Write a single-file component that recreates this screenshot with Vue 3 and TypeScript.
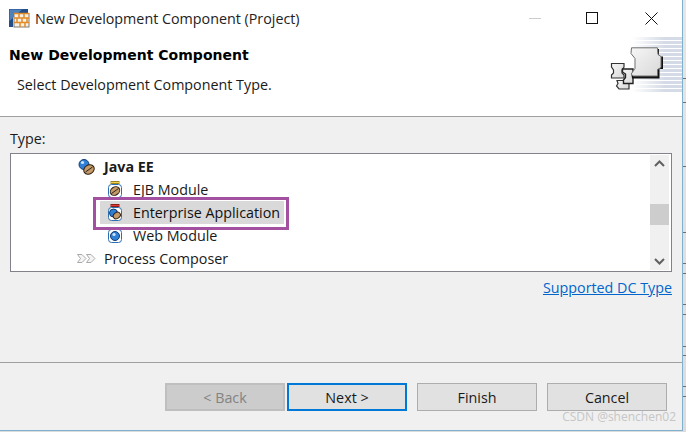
<script setup lang="ts">
const ticks = [78, 102, 166, 232, 263, 273, 304, 314, 346, 355, 386, 396];
const stripes = Array.from({ length: 14 }, (_, i) => 1 + i * 4);
</script>

<template>
  <div class="screen">
    <div class="dialog">
      <div class="titlebar">
        <svg class="app-icon" width="21" height="19" viewBox="0 0 21 19">
          <path d="M0 18V0H19V4H4V18Z" fill="#234e88" />
          <path d="M0.5 15V0.5H13L0.5 12Z" fill="#4f82bb" />
          <rect x="5" y="4.5" width="15" height="13.5" fill="#f6f1e6" stroke="#86796a" />
          <path d="M5 4.5H20M5 9H20M5 13.5H20M10 4.5V9M15 4.5V9M8 9V13.5M13 9V13.5M18 9V13.5M11 13.5V18M16 13.5V18" stroke="#e38b26" stroke-width="1.5" fill="none" />
        </svg>
        <span class="title">New Development Component (Project)</span>
        <span class="minimize"></span>
        <span class="maximize"></span>
        <svg class="close" width="13" height="13" viewBox="0 0 13 13">
          <path d="M0.5 0.5L12.5 12.5M12.5 0.5L0.5 12.5" stroke="#111" fill="none" />
        </svg>
      </div>

      <header class="banner">
        <div class="banner-text">
          <h1>New Development Component</h1>
          <p>Select Development Component Type.</p>
        </div>
        <svg class="banner-art" width="75" height="60" viewBox="0 0 75 60">
          <defs>
            <linearGradient id="fade" x1="0" x2="1" y1="0" y2="0">
              <stop offset="0" stop-color="#d5dbe6" stop-opacity="0" />
              <stop offset="0.65" stop-color="#d5dbe6" />
              <stop offset="1" stop-color="#d5dbe6" />
            </linearGradient>
            <linearGradient id="metal" x1="0" x2="1" y1="0" y2="1">
              <stop offset="0" stop-color="#f6f6f6" />
              <stop offset="1" stop-color="#d8d8d8" />
            </linearGradient>
          </defs>
          <rect v-for="y in stripes" :key="y" x="25" :y="y" width="50" height="3" fill="url(#fade)" />
          <path d="M10 44.5H22V53H12L9.5 50L11 47.5Z" fill="url(#metal)" stroke="#333" stroke-width="1.2" />
          <path d="M4.5 27.5H17V31L15 34V37L17 39V42H4.5V39L6.5 37V34L4.5 31Z" fill="url(#metal)" stroke="#333" stroke-width="1.2" />
          <path d="M15.5 33H26V47.5H16.5V44L18.5 41.5V38L15.5 36Z" fill="url(#metal)" stroke="#222" stroke-width="1.4" />
          <path d="M25 13H52V20.5H56V33H52.5V42.5H25L24.5 39L29 33V23L25 18Z" fill="#111" />
          <path d="M24.5 11.8H50.5L51 18.5L54 20.5V31.5L50.5 33.5V40H26L24.2 38L28 32.5V22.5L24 17.5Z" fill="url(#metal)" stroke="#707070" />
        </svg>
      </header>

      <main class="body">
        <label class="type-label">Type:</label>
        <div class="list">
          <ul class="rows">
            <li class="row parent">
              <svg width="17" height="16" viewBox="0 0 17 16">
                <circle cx="6" cy="5.5" r="5" fill="#2f7fd6" stroke="#123a70" />
                <circle cx="4.5" cy="3.5" r="1.6" fill="#cfe6ff" />
                <ellipse cx="11" cy="10.5" rx="5.5" ry="4.5" transform="rotate(-35 11 10.5)" fill="#c39a68" stroke="#2e2015" />
                <path d="M7.5 13L14.5 8" stroke="#2e2015" />
              </svg>
              <b>Java EE</b>
            </li>
            <li class="row child">
              <svg width="16" height="17" viewBox="0 0 16 17">
                <rect x="4" y="0.5" width="8" height="2" fill="#f2d24b" stroke="#9c8320" />
                <rect x="1.5" y="3.5" width="13" height="13" rx="3" fill="#fff" stroke="#2b6fb0" />
                <ellipse cx="8" cy="10" rx="5" ry="4" transform="rotate(-35 8 10)" fill="#c39a68" stroke="#2e2015" />
                <path d="M4.5 12.5L11.5 7.5" stroke="#2e2015" />
              </svg>
              <span>EJB Module</span>
            </li>
            <li class="row child selected">
              <svg width="16" height="17" viewBox="0 0 16 17">
                <rect x="4" y="0.5" width="8" height="2" fill="#e23a32" stroke="#8c1e1a" />
                <rect x="1.5" y="3.5" width="13" height="13" rx="3" fill="#fff" stroke="#2b6fb0" />
                <circle cx="6.5" cy="9" r="4" fill="#2f7fd6" stroke="#123a70" />
                <ellipse cx="9.8" cy="11.5" rx="3.8" ry="3" transform="rotate(-35 9.8 11.5)" fill="#c39a68" stroke="#2e2015" />
              </svg>
              <span>Enterprise Application</span>
            </li>
            <li class="row child">
              <svg width="16" height="17" viewBox="0 0 16 17">
                <rect x="1.5" y="2.5" width="13" height="13" rx="3" fill="#fff" stroke="#2b6fb0" />
                <circle cx="8" cy="9" r="4.5" fill="#2f7fd6" stroke="#123a70" />
                <circle cx="7" cy="7.5" r="1.6" fill="#cfe6ff" />
              </svg>
              <span>Web Module</span>
            </li>
            <li class="row parent">
              <svg width="19" height="9" viewBox="0 0 19 9">
                <path d="M0.5 0.5H5L9 4.5L5 8.5H0.5L3.5 4.5ZM9.5 0.5H14L18 4.5L14 8.5H9.5L12.5 4.5Z" fill="#f4f4f4" stroke="#aaa" />
              </svg>
              <span>Process Composer</span>
            </li>
          </ul>
          <div class="scrollbar">
            <svg class="arrow" width="19" height="17" viewBox="0 0 19 17">
              <path d="M5 11L9.5 6.5L14 11" stroke="#606060" stroke-width="2" fill="none" />
            </svg>
            <div class="track"><div class="thumb"></div></div>
            <svg class="arrow" width="19" height="17" viewBox="0 0 19 17">
              <path d="M5 6L9.5 10.5L14 6" stroke="#606060" stroke-width="2" fill="none" />
            </svg>
          </div>
          <div class="highlight"></div>
        </div>
        <div class="link-row"><a class="link">Supported DC Type</a></div>
      </main>

      <footer class="footer">
        <button class="btn disabled" type="button">&lt; Back</button>
        <button class="btn primary" type="button">Next &gt;</button>
        <button class="btn finish" type="button">Finish</button>
        <button class="btn cancel" type="button">Cancel</button>
        <span class="watermark">CSDN @shenchen02</span>
      </footer>
    </div>
    <svg class="strip" width="3" height="432" viewBox="0 0 3 432">
      <rect v-for="y in ticks" :key="y" x="0" :y="y" width="3" height="1" fill="#6f6f6f" />
    </svg>
  </div>
</template>

<style>
html,
body {
  margin: 0;
  background: #fff;
}
</style>

<style scoped>
.screen {
  display: flex;
  width: 686px;
  height: 432px;
  overflow: hidden;
  font-family: "Open Sans", "Liberation Sans", sans-serif;
  font-size: 14.3px;
  color: #1a1a1a;
  background: linear-gradient(#e6e6e6, #dcdcdc);
}

.dialog {
  display: flex;
  flex-direction: column;
  position: relative;
  box-sizing: border-box;
  width: 683px;
  height: 431px;
  background: #f0f0f0;
  border-right: 1px solid #7fb0cf;
  border-bottom: 1px solid #7fb0cf;
}

.strip {
  flex: none;
}

.titlebar {
  display: flex;
  align-items: center;
  height: 36px;
  padding-left: 9px;
  background: #fff;
}

.app-icon {
  flex: none;
  margin-right: 5px;
}

.title {
  flex: 1;
  color: #222;
}

.minimize {
  width: 12px;
  height: 1px;
  background: #ccc;
}

.maximize {
  box-sizing: border-box;
  width: 12px;
  height: 12px;
  margin-left: 45px;
  border: 1px solid #111;
}

.close {
  margin: 0 24px 0 47px;
}

.banner {
  display: flex;
  justify-content: space-between;
  box-sizing: border-box;
  height: 81px;
  background: #fff;
  border-bottom: 1px solid #a0a0a0;
}

.banner-text {
  padding: 8px 0 0 9px;
}

h1 {
  margin: 0;
  font-family: "DejaVu Sans", sans-serif;
  font-size: 14px;
  font-weight: 700;
  line-height: 23px;
  letter-spacing: 0.03px;
  color: #000;
}

p {
  margin: 8px 0 0 8px;
  line-height: 20px;
}

.banner-art {
  flex: none;
}

.body {
  flex: 1;
  padding: 12px 10px 0;
  border-bottom: 1px solid #a0a0a0;
}

.type-label {
  display: block;
  line-height: 20px;
  margin-bottom: 4px;
}

.list {
  display: flex;
  position: relative;
  box-sizing: border-box;
  width: 662px;
  height: 119px;
  padding: 1px;
  background: #fff;
  border: 1px solid #82828a;
}

.rows {
  flex: 1;
  margin: 0;
  padding: 0;
  list-style: none;
}

.row {
  display: flex;
  align-items: center;
  height: 23px;
}

.parent {
  padding-left: 65px;
}

.parent svg {
  flex: none;
  width: 19px;
  margin-right: 8px;
}

.child {
  padding-left: 95px;
}

.child svg {
  flex: none;
  margin-right: 10px;
}

.selected {
  width: 184px;
  margin-left: 88px;
  padding-left: 7px;
  box-sizing: border-box;
  background: #d9d9d9;
}

.selected span {
  color: #111;
}

.scrollbar {
  display: flex;
  flex-direction: column;
  width: 19px;
  margin-right: 1px;
  background: #f0f0f0;
}

.arrow {
  flex: none;
}

.track {
  flex: 1;
  padding-top: 32px;
}

.thumb {
  height: 21px;
  background: #cdcdcd;
}

.highlight {
  position: absolute;
  left: 82px;
  top: 43px;
  box-sizing: border-box;
  width: 196px;
  height: 33px;
  border: 3px solid #a2509f;
}

.link-row {
  display: flex;
  justify-content: flex-end;
  width: 662px;
  margin-top: 6px;
}

.link {
  color: #0066cc;
  text-decoration: underline;
  line-height: 20px;
}

.footer {
  display: flex;
  align-items: flex-start;
  height: 67px;
  padding: 20px 0 0 165px;
  box-sizing: border-box;
}

.btn {
  box-sizing: border-box;
  width: 120px;
  height: 28px;
  padding: 0;
  font: inherit;
  color: #1a1a1a;
  background: #e1e1e1;
  border: 1px solid #adadad;
}

.disabled {
  color: #838383;
  background: #cccccc;
  border: 2px solid #bfbfbf;
}

.primary {
  margin-left: 2px;
  border: 2px solid #0078d7;
}

.finish {
  margin-left: 10px;
}

.cancel {
  margin-left: 10px;
}

.watermark {
  position: absolute;
  right: 6px;
  bottom: 5px;
  font-size: 12px;
  line-height: 16px;
  color: #c6c6c6;
}
</style>
